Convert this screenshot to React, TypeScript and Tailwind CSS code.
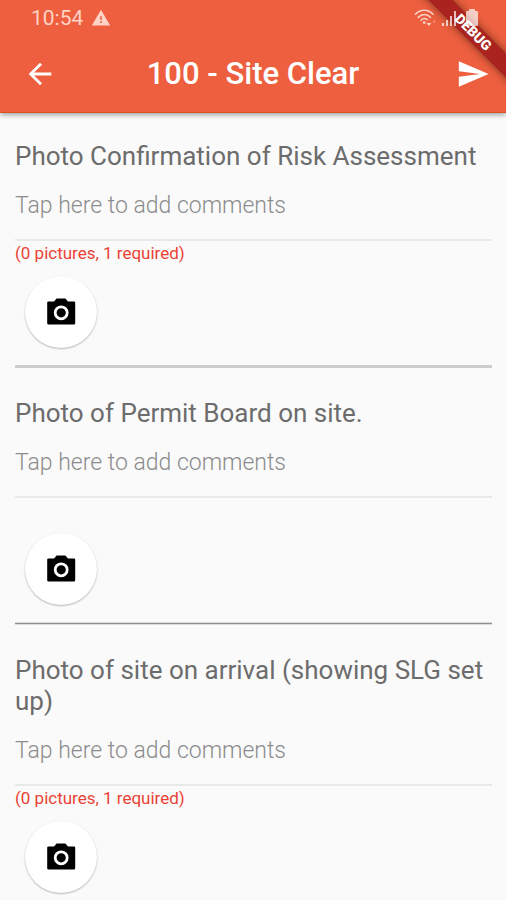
import React from 'react';
import { MdArrowBack, MdSend, MdWarning } from 'react-icons/md';

type PhotoTask = {
  id: string;
  title: string;
  notice: string;
  divider: string;
};

const tasks: PhotoTask[] = [
  {
    id: 'risk',
    title: 'Photo Confirmation of Risk Assessment',
    notice: '(0 pictures, 1 required)',
    divider: 'bg-[#cdcdcd]',
  },
  {
    id: 'permit',
    title: 'Photo of Permit Board on site.',
    notice: '',
    divider: 'border-y border-[#dcdcdc] bg-[#8f8f8f]',
  },
  {
    id: 'arrival',
    title: 'Photo of site on arrival (showing SLG set up)',
    notice: '(0 pictures, 1 required)',
    divider: 'bg-[#cdcdcd]',
  },
];

const CameraIcon = () => (
  <svg className="h-[34px] w-[34px]" viewBox="0 0 34 34" aria-hidden="true">
    <path d="M12.6 3.6h8.8l2.6 2.8h6q1.2 0 1.2 1.2v20.6q0 1.2-1.2 1.2H4.4q-1.2 0-1.2-1.2V7.6q0-1.2 1.2-1.2h5.6z" />
    <circle cx="17.2" cy="17.8" r="6" fill="none" stroke="#fff" strokeWidth="2.8" />
  </svg>
);

const StatusIcons = () => (
  <svg className="relative z-10 h-[20px] w-[66px] text-white/70" viewBox="0 0 66 20" fill="none" aria-hidden="true">
    {/* wifi */}
    <g stroke="currentColor" strokeWidth="1.6" strokeLinecap="round">
      <path d="M1.5 6.2C6.5 1 14 1 19 6.2" />
      <path d="M4.2 9.4C8 5.5 12.7 5.5 16.4 9.2" />
      <path d="M7 12.2C9 10.2 11.4 10.2 13.2 11.6" />
    </g>
    <circle cx="10.2" cy="14.6" r="1.4" fill="currentColor" />
    <path d="M12.4 15h5l-2.5 3z" fill="currentColor" />
    <path d="M19 13.4l2-2v4z" fill="currentColor" opacity="0.5" />
    {/* signal */}
    <g fill="currentColor">
      <rect x="28" y="15" width="2" height="3" />
      <rect x="32" y="12" width="2" height="6" />
      <rect x="36" y="8" width="2" height="10" />
      <rect x="40" y="3" width="2" height="15" />
    </g>
    {/* battery */}
    <path d="M55 1h6v2h2a1 1 0 0 1 1 1v13a1 1 0 0 1-1 1H53a1 1 0 0 1-1-1V4a1 1 0 0 1 1-1h2z" fill="currentColor" />
  </svg>
);

const DebugBanner = () => (
  <div className="pointer-events-none absolute top-0 right-0 h-24 w-24 overflow-hidden">
    <div className="absolute top-[24px] -right-[32px] flex h-[17px] w-[130px] rotate-45 items-center justify-center bg-[#ab231e] text-[14px] font-black text-white shadow-[0_0_8px_rgba(0,0,0,0.5)]">
      DEBUG
    </div>
  </div>
);

const Header = () => (
  <header className="relative bg-[#ed5f3e] text-white shadow-[0_2px_5px_rgba(0,0,0,0.35)]">
    <DebugBanner />
    <div className="flex h-[35px] items-center justify-between pr-[26px] pl-[31px]">
      <div className="flex items-center gap-2 text-[#ffd2c5]">
        <span className="text-[21px] leading-6">10:54</span>
        <MdWarning size={20} />
      </div>
      <StatusIcons />
    </div>
    <div className="grid h-[78px] grid-cols-[79px_1fr_79px] items-center border-b border-[#dc5027]">
      <button type="button" aria-label="Back" className="flex h-[67px] items-center justify-center">
        <MdArrowBack size={34} />
      </button>
      <h1 className="text-center text-[31px] leading-9 font-medium whitespace-nowrap">100 - Site Clear</h1>
      <button type="button" aria-label="Send" className="flex h-[67px] w-[67px] items-center justify-center justify-self-end">
        <MdSend size={34} />
      </button>
    </div>
  </header>
);

const TaskItem = ({ task }: { task: PhotoTask }) => (
  <section className="pt-7 pb-[2px]">
    <label htmlFor={task.id} className="block text-[26px] leading-[31px] text-[#6c6c6c]">
      {task.title}
    </label>
    <input
      id={task.id}
      type="text"
      placeholder="Tap here to add comments"
      className="block h-[69px] w-full border-b-2 border-[#e9e9e9] bg-transparent text-[23px] font-light text-[#555555] outline-none placeholder:text-[#8c8c8c]"
    />
    <p className="h-[27px] pt-[2px] text-[17px] leading-5 text-[#ea4335]">{task.notice}</p>
    <button
      type="button"
      aria-label={`Add picture: ${task.title}`}
      className="mt-2 ml-[10px] flex h-[72px] w-[72px] items-center justify-center rounded-full bg-white text-black shadow-[0_1px_2px_rgba(0,0,0,0.28)]"
    >
      <CameraIcon />
    </button>
    <div className={`mt-[17px] h-[3px] ${task.divider}`} />
  </section>
);

const App = () => {
  return (
    <div className="h-screen overflow-hidden bg-[#fafafa] font-[Roboto,sans-serif]">
      <Header />
      <main className="pr-[14px] pl-[15px]">
        {tasks.map((task) => (
          <TaskItem key={task.id} task={task} />
        ))}
      </main>
    </div>
  );
};

export default App;
